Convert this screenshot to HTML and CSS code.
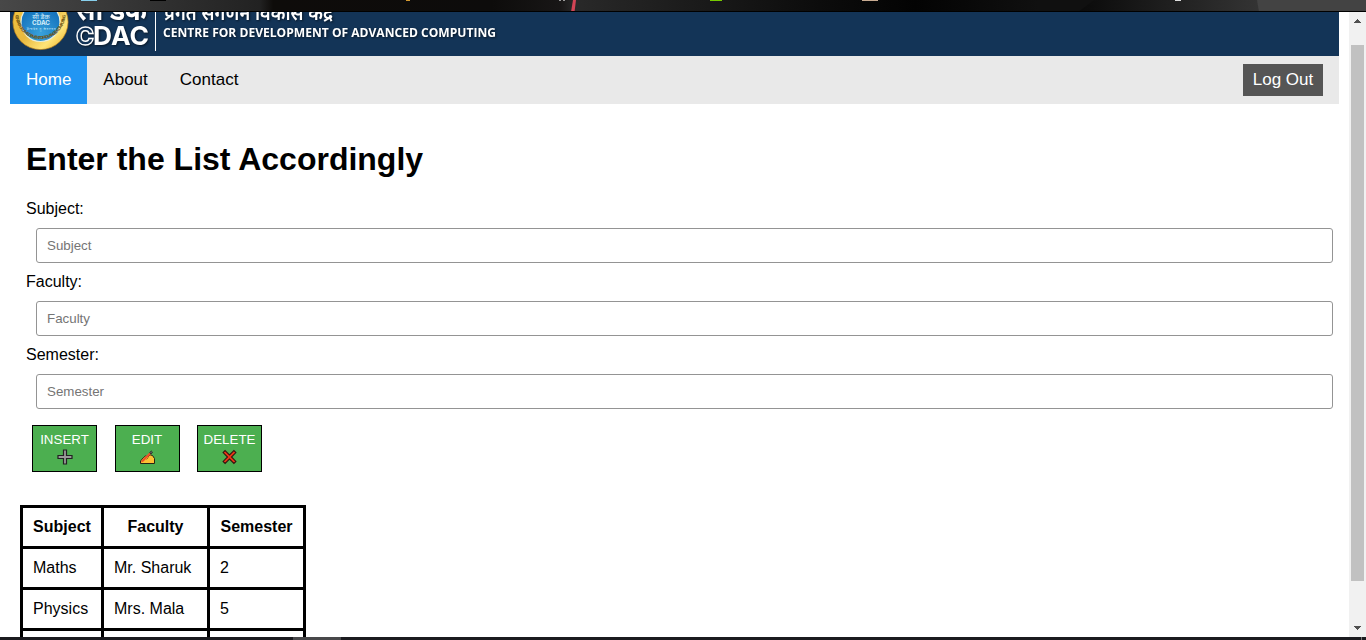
FILE: index.html
```html
<!DOCTYPE html>
<html lang="en">
<head>
<meta charset="utf-8">
<title>Enter the List Accordingly</title>
<link rel="stylesheet" href="styles.css">
</head>
<body>
<div class="desktop">
  <svg class="desktop-top" width="1366" height="12" viewBox="0 0 1366 12">
    <defs>
      <linearGradient id="wall" x1="0" x2="1">
        <stop offset="0" stop-color="#484848"/><stop offset=".09" stop-color="#363636"/>
        <stop offset=".19" stop-color="#222"/><stop offset=".2" stop-color="#0e0c0a"/>
        <stop offset=".36" stop-color="#0d0c0b"/><stop offset=".41" stop-color="#181616"/>
        <stop offset=".421" stop-color="#292929"/><stop offset=".45" stop-color="#242424"/>
        <stop offset=".6" stop-color="#0c0c0c"/><stop offset=".67" stop-color="#030303"/>
        <stop offset=".76" stop-color="#101010"/><stop offset="1" stop-color="#101010"/>
      </linearGradient>
      <linearGradient id="wedge" x1="0" x2="1"><stop offset="0" stop-color="#0a0a0a"/><stop offset="1" stop-color="#343434"/></linearGradient>
    </defs>
    <rect width="1366" height="12" fill="url(#wall)"/>
    <path d="M1094 0H1258L1260 12H1078Z" fill="url(#wedge)"/>
    <path d="M1257 0H1366V12H1259Z" fill="#434343"/>
    <path d="M573 0H576L574.500 12H571Z" fill="#d24455"/>
    <path d="M81 0H97V1H81Z" fill="#87ceeb"/><path d="M150 0H166V1H150Z" fill="#000"/>
    <path d="M406 0H410V1H406Z" fill="#d49a30"/><path d="M559 0H561V1H559ZM563 0H565V1H563Z" fill="#999"/>
    <path d="M710 0H722V1H710Z" fill="#76c900"/><path d="M862 0H878V1H862Z" fill="#c8ab91"/>
    <path d="M1175 0H1181V1H1175Z" fill="#ddd"/>
    <path d="M0 11H1366V12H0Z" fill="#000"/>
  </svg>
  <div class="browser">
    <main class="page">
      <header class="banner">
        <svg class="brand" width="600" height="44" viewBox="0 12 600 44">
          <defs>
            <linearGradient id="gold" x1="0" y1="0" x2="1" y2="1"><stop offset="0" stop-color="#f5c840"/><stop offset=".5" stop-color="#e8b83f"/><stop offset=".75" stop-color="#ffe477"/><stop offset="1" stop-color="#e8a91e"/></linearGradient>
            <radialGradient id="blue" cx=".5" cy=".8" r=".7"><stop offset="0" stop-color="#39a2dc"/><stop offset="1" stop-color="#126fba"/></radialGradient>
            <path id="ring" d="M5.500 14A25 25 0 1 0 55.500 14"/>
          </defs>
          <circle cx="30.500" cy="22" r="27.600" fill="url(#gold)" stroke="#b87f1c" stroke-width=".7"/>
          <circle cx="30.500" cy="22" r="19.500" fill="url(#blue)" stroke="#e9edda" stroke-width="1.200"/>
          <text class="ring-text"><textPath href="#ring" startOffset="1" textLength="76">CENTRE FOR DEVELOPMENT OF ADVANCED COMPUTING</textPath></text>
          <text class="seal-text seal-hindi" x="31" y="18.500">सी डैक</text>
          <text class="seal-text seal-name" x="31" y="24.800" textLength="18" lengthAdjust="spacingAndGlyphs">CDAC</text>
          <text class="seal-text seal-motto" x="31" y="30" textLength="29">ज्ञानादेव तु कैवल्यम्</text>
          <g class="shadowed">
            <text class="logo-hindi" x="66" y="20" textLength="71" lengthAdjust="spacingAndGlyphs">सी डैक</text>
            <text class="logo-c" x="66" y="45" textLength="18" lengthAdjust="spacingAndGlyphs">C</text>
            <text class="logo-dac" x="83" y="45" textLength="56" lengthAdjust="spacingAndGlyphs">DAC</text>
            <text class="hindi-title" x="154" y="20" textLength="169" lengthAdjust="spacingAndGlyphs">प्रगत संगणन विकास केंद्र</text>
            <text class="title" x="153" y="37" textLength="333" lengthAdjust="spacingAndGlyphs">CENTRE FOR DEVELOPMENT OF ADVANCED COMPUTING</text>
          </g>
          <path d="M145 12H146V51H145Z" fill="#fff"/>
        </svg>
      </header>
      <nav class="topnav">
        <a class="nav-link active">Home</a>
        <a class="nav-link">About</a>
        <a class="nav-link">Contact</a>
        <button class="logout">Log Out</button>
      </nav>
      <section class="content">
        <h1 class="heading">Enter the List Accordingly</h1>
        <form class="form">
          <label class="label" for="subject">Subject:</label>
          <input class="field" id="subject" placeholder="Subject">
          <label class="label" for="faculty">Faculty:</label>
          <input class="field" id="faculty" placeholder="Faculty">
          <label class="label" for="semester">Semester:</label>
          <input class="field" id="semester" placeholder="Semester">
          <div class="actions">
            <button class="action" type="button">INSERT
              <svg class="icon" width="16" height="16" viewBox="0 0 16 16"><path d="M6.500 1H9.500V6.500H15V9.500H9.500V15H6.500V9.500H1V6.500H6.500Z" fill="#999" stroke="#222" stroke-width="1.200"/></svg>
            </button>
            <button class="action" type="button">EDIT
              <svg class="icon" width="16" height="16" viewBox="0 0 16 16"><path d="M1.500 14.500V12L4.500 8.500 6.500 7 9 7.800 11 5.800 13.500 6.500 15.500 9.500V14.500Z" fill="#fcc233" stroke="#282414" stroke-width="1"/><path d="M2 13.500 3 11 10.500 3.500 12 5 4.500 12.500Z" fill="#ef5129"/><path d="M10.700 3.500 12.300 2 13.500 3.200 12 5Z" fill="#666" stroke="#222" stroke-width=".8"/><path d="M7.500 10.500 9.500 8.500" stroke="#8b5b13" stroke-width=".8"/></svg>
            </button>
            <button class="action" type="button">DELETE
              <svg class="icon" width="16" height="16" viewBox="0 0 16 16"><path d="M3.100 1.600 7.500 6 11.900 1.600 13.900 3.600 9.500 8 13.900 12.400 11.900 14.400 7.500 10 3.100 14.400 1.100 12.400 5.500 8 1.100 3.600Z" fill="#ee3517" stroke="#321710" stroke-width="1.100"/></svg>
            </button>
          </div>
        </form>
      </section>
      <table class="list">
        <colgroup><col class="col-subject"><col class="col-faculty"><col class="col-semester"></colgroup>
        <thead><tr><th>Subject</th><th>Faculty</th><th>Semester</th></tr></thead>
        <tbody>
          <tr><td>Maths</td><td>Mr. Sharuk</td><td>2</td></tr>
          <tr><td>Physics</td><td>Mrs. Mala</td><td>5</td></tr>
          <tr><td></td><td></td><td></td></tr>
        </tbody>
      </table>
    </main>
    <div class="scrollbar">
      <svg width="7" height="4" viewBox="0 0 7 4" shape-rendering="crispEdges"><path d="M3 0H4V1H5V2H6V3H7V4H0V3H1V2H2V1H3Z" fill="#505050"/></svg>
      <div class="thumb"></div>
      <svg class="down" width="7" height="4" viewBox="0 0 7 4" shape-rendering="crispEdges"><path d="M0 0H7V1H6V2H5V3H4V4H3V3H2V2H1V1H0Z" fill="#505050"/></svg>
    </div>
  </div>
  <div class="taskbar"><span class="task"></span><span class="show-desktop"></span></div>
</div>
</body>
</html>
```
FILE: styles.css
```css
* { box-sizing: border-box; }
body { margin: 0; overflow: hidden; background: #fff; color: #000; font: 16px "Liberation Sans", Arial, sans-serif; }
.desktop { height: 640px; display: flex; flex-direction: column; }
.desktop-top { display: block; flex: none; }
.browser { flex: 1; min-height: 0; display: flex; overflow: hidden; }
.page { flex: 1; min-width: 0; padding: 0 10px; overflow: hidden; }

.banner { height: 44px; background: #133457; overflow: hidden; }
.brand { display: block; fill: #fff; font-family: "Open Sans", "Noto Sans", sans-serif; }
.shadowed { filter: drop-shadow(1px 1px 1px rgba(0, 0, 0, .55)); }
.ring-text { font-size: 4.2px; font-weight: 700; fill: #6f5414; }
.seal-text { text-anchor: middle; fill: #d7effa; }
.seal-hindi { font-size: 7px; }
.seal-name { font: 700 6px Inter, sans-serif; }
.seal-motto { font-size: 3px; }
.logo-hindi { font-size: 31px; font-weight: 700; }
.logo-c { font: 800 25px Inter, sans-serif; fill: #133457; stroke: #fff; stroke-width: 1.4px; }
.logo-dac { font: 700 26px Inter, sans-serif; }
.hindi-title { font-size: 20px; font-weight: 600; }
.title { font-size: 13px; font-weight: 700; }

.topnav { height: 48px; display: flex; align-items: center; background: #e9e9e9; padding-right: 16px; }
.nav-link { height: 48px; padding: 14px 16px; font-size: 17px; line-height: 19px; }
.active { background: #2196f3; color: #fff; }
.logout { margin-left: auto; width: 80px; height: 32px; padding: 0; border: 0; background: #555; color: #fff; font: 17px "Liberation Sans", Arial, sans-serif; }

.content { padding: 0 6px 0 16px; }
.heading { margin: 0; padding-top: 36px; font-size: 32px; line-height: 38px; }
.form { display: flex; flex-direction: column; padding-top: 21px; }
.label { height: 29px; line-height: 19px; }
.field { height: 35px; margin: 0 0 9px 10px; padding: 0 10px; border: 1px solid #949494; border-radius: 3px; font: 13.333px "Liberation Sans", Arial, sans-serif; }
.field::placeholder { color: #757575; }
.actions { display: flex; gap: 17.5px; padding: 7px 0 0 6px; }
.action { width: 65px; height: 47px; padding: 0; display: flex; flex-direction: column; align-items: center; justify-content: flex-start; border: 1px solid #000; background: #4caf50; color: #fff; font: 13.333px/16px "Liberation Sans", Arial, sans-serif; padding-top: 6px; }
.icon { display: block; margin-top: 1px; }

.list { margin: 33px 0 0 10px; width: 286px; table-layout: fixed; border-collapse: separate; border-spacing: 3px; background: #000; }
.col-subject { width: 78px; }
.col-faculty { width: 103px; }
.col-semester { width: 93px; }
.list th, .list td { height: 38px; padding: 0 10px; background: #fff; white-space: nowrap; }
.list td { text-align: left; }

.scrollbar { width: 17px; flex: none; background: #f1f1f1; display: flex; flex-direction: column; align-items: center; padding: 7px 0; }
.thumb { width: 13px; height: 536px; margin-top: 22px; background: #c1c1c1; }
.down { margin-top: auto; }

.taskbar { height: 3px; flex: none; display: flex; background: #1b1b1f; padding-left: 293px; }
.task { width: 48px; background: #48484a; }
.show-desktop { width: 1px; margin: 0 4px 0 auto; background: #777; }
```
